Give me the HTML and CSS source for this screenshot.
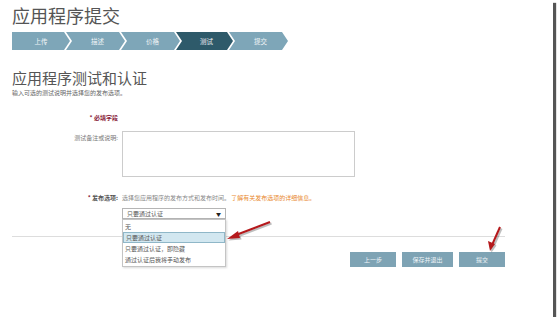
FILE: index.html
```html
<!DOCTYPE html>
<html lang="zh-CN">
<head>
    <meta charset="UTF-8">
    <title>应用程序提交</title>
    <link rel="stylesheet" href="styles.css">
</head>
<body>
    <div class="frame">
        <h1>应用程序提交</h1>

        <!-- Steps -->
        <div class="steps">
            <div class="step first">上传</div>
            <div class="step">描述</div>
            <div class="step">价格</div>
            <div class="step current">测试</div>
            <div class="step">提交</div>
        </div>

        <h2>应用程序测试和认证</h2>
        <p class="intro">输入可选的测试说明并选择您的发布选项。</p>

        <div class="form">
            <div class="label required"><span class="star">*</span> 必填字段</div>
            <div></div>

            <div class="label">测试备注或说明:</div>
            <div class="notes"></div>

            <div class="label strong"><span class="star">*</span> 发布选项:</div>
            <div class="release">
                <div class="hint">选择您应用程序的发布方式和发布时间。 <a href="#">了解有关发布选项的详细信息。</a></div>
                <div class="select">
                    <span>只要通过认证</span>
                    <span class="caret">▼</span>
                    <ul class="options">
                        <li>无</li>
                        <li class="active">只要通过认证</li>
                        <li>只要通过认证，即隐藏</li>
                        <li>通过认证后我将手动发布</li>
                    </ul>
                </div>
            </div>
        </div>

        <hr>

        <div class="actions">
            <button>上一步</button>
            <button class="wide">保存并退出</button>
            <button>提交</button>
        </div>

        <!-- Annotation arrows -->
        <svg class="arrows" width="553" height="317" viewBox="0 0 553 317">
            <g fill="#000" opacity="0.25" transform="translate(1.5 1.5)">
                <path d="M270 222 L236 235" stroke="#000" stroke-width="2"/>
                <polygon points="227,239 238,231 240,238"/>
                <path d="M500 227 L492.5 244" stroke="#000" stroke-width="2"/>
                <polygon points="490,251 488,241 495,244"/>
            </g>
            <g fill="#b5191c">
                <path d="M270 222 L236 235" stroke="#b5191c" stroke-width="2"/>
                <polygon points="227,239 238,231 240,238"/>
                <path d="M500 227 L492.5 244" stroke="#b5191c" stroke-width="2"/>
                <polygon points="490,251 488,241 495,244"/>
            </g>
        </svg>
    </div>
</body>
</html>
```

FILE: styles.css
```css
/* Basic Reset */
* {
    box-sizing: border-box;
    margin: 0;
    padding: 0;
}

body {
    font-family: "Noto Sans CJK SC", "Liberation Sans", sans-serif;
    background: #fff;
    color: #666;
}

/* Screenshot frame with shadow */
.frame {
    position: relative;
    width: 553px;
    height: 317px;
    padding: 6px 0 0 12px;
    background: #fff;
    box-shadow: 3px 3px 1px #555;
}

h1 {
    font-size: 18px;
    line-height: 18px;
    font-weight: 400;
    color: #555;
}

/* Step bar */
.steps {
    display: flex;
    margin-top: 8px;
    height: 18px;
}

.step {
    width: 59px;
    height: 18px;
    margin-left: -4px;
    background: #7ea6b8;
    color: #eef4f7;
    font-size: 6.5px;
    line-height: 18px;
    text-align: center;
    padding-left: 4px;
    clip-path: polygon(0 0, calc(100% - 6px) 0, 100% 50%, calc(100% - 6px) 100%, 0 100%, 6px 50%);
}

.step.first {
    margin-left: 0;
    width: 58px;
    padding-left: 0;
    clip-path: polygon(0 0, calc(100% - 6px) 0, 100% 50%, calc(100% - 6px) 100%, 0 100%);
}

.step.current {
    width: 57px;
    background: #2e5a6a;
}

h2 {
    margin-top: 19px;
    font-size: 15px;
    line-height: 18px;
    font-weight: 400;
    color: #555;
}

.intro {
    margin-top: 2px;
    font-size: 6px;
    line-height: 8px;
    color: #666;
}

/* Form grid */
.form {
    display: grid;
    grid-template-columns: 106px 233px;
    column-gap: 4px;
    margin-top: 17px;
    font-size: 6px;
    line-height: 8px;
}

.label {
    text-align: right;
    color: #777;
}

.label.required {
    color: #8a1d3c;
    font-weight: 700;
    margin-bottom: 12px;
}

.label.strong {
    color: #555;
    font-weight: 700;
    margin-top: 17px;
}

.star {
    color: #8a1d3c;
}

.label + .notes {
    margin-top: -3px;
}

.notes {
    height: 46px;
    border: 1px solid #ccc;
}

.release {
    margin-top: 17px;
}

.hint {
    color: #888;
    white-space: nowrap;
}

.hint a {
    color: #e9892e;
    text-decoration: none;
}

/* Fake select with open list */
.select {
    position: relative;
    width: 104px;
    height: 11px;
    margin-top: 6px;
    padding: 0 4px;
    border: 1px solid #b5b5b5;
    display: flex;
    justify-content: space-between;
    align-items: center;
    color: #555;
}

.caret {
    font-size: 5px;
    color: #222;
}

.options {
    position: absolute;
    left: -1px;
    top: 10px;
    width: 104px;
    list-style: none;
    background: #fff;
    border: 1px solid #c4c4c4;
    box-shadow: 1px 1px 2px rgba(0, 0, 0, 0.15);
    padding: 1px 0;
}

.options li {
    height: 11px;
    line-height: 11px;
    padding-left: 2px;
    color: #555;
}

.options li.active {
    background: #d2e7f0;
    border: 1px solid #8fb7c8;
    line-height: 9px;
}

hr {
    width: 493px;
    margin-top: 17px;
    border: none;
    border-top: 1px solid #ddd;
}

/* Buttons */
.actions {
    display: flex;
    justify-content: flex-end;
    gap: 6px;
    width: 493px;
    margin-top: 15px;
}

.actions button {
    width: 46px;
    height: 15px;
    border: none;
    background: #7ea3b4;
    color: #eef4f7;
    font-family: inherit;
    font-size: 6px;
}

.actions button.wide {
    width: 51px;
}

.arrows {
    position: absolute;
    left: 0;
    top: 0;
    pointer-events: none;
}
```
